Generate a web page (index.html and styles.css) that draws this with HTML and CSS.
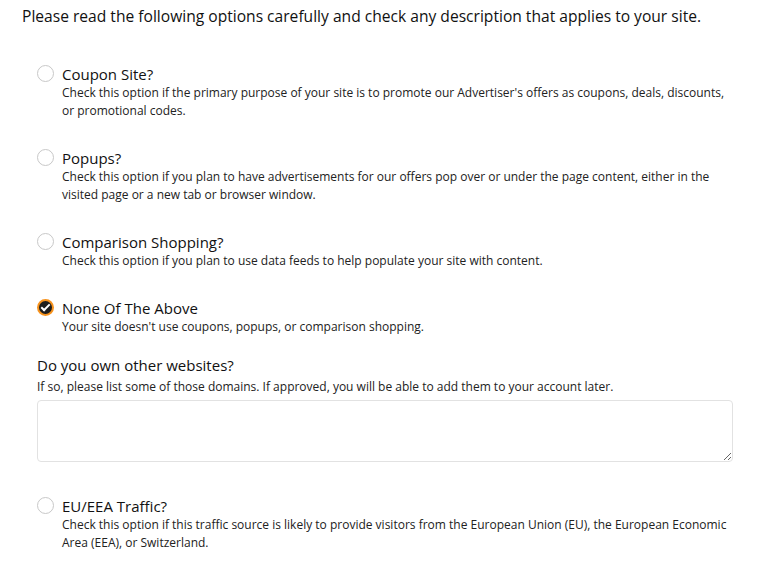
FILE: index.html
```html
<!DOCTYPE html>
<html lang="en">
<head>
  <meta charset="UTF-8">
  <title>Site Description</title>
  <link rel="stylesheet" href="styles.css">
</head>
<body>

<div class="page">
  <h3 class="intro">Please read the following options carefully and check any description that applies to your site.</h3>

  <div class="options">
    <label class="option">
      <input type="radio" name="sitetype" value="coupon">
      <span class="mark"></span>
      <span class="text">
        <span class="title">Coupon Site?</span>
        <span class="desc">Check this option if the primary purpose of your site is to promote our Advertiser's offers as coupons, deals, discounts, or promotional codes.</span>
      </span>
    </label>

    <label class="option">
      <input type="radio" name="sitetype" value="popups">
      <span class="mark"></span>
      <span class="text">
        <span class="title">Popups?</span>
        <span class="desc">Check this option if you plan to have advertisements for our offers pop over or under the page content, either in the visited page or a new tab or browser window.</span>
      </span>
    </label>

    <label class="option">
      <input type="radio" name="sitetype" value="comparison">
      <span class="mark"></span>
      <span class="text">
        <span class="title">Comparison Shopping?</span>
        <span class="desc">Check this option if you plan to use data feeds to help populate your site with content.</span>
      </span>
    </label>

    <label class="option">
      <input type="radio" name="sitetype" value="none" checked>
      <span class="mark"></span>
      <span class="text">
        <span class="title">None Of The Above</span>
        <span class="desc">Your site doesn't use coupons, popups, or comparison shopping.</span>
      </span>
    </label>

    <div class="field">
      <label class="field-title" for="domains">Do you own other websites?</label>
      <p class="field-help">If so, please list some of those domains. If approved, you will be able to add them to your account later.</p>
      <textarea id="domains"></textarea>
    </div>

    <label class="option">
      <input type="checkbox" name="eu" value="eu">
      <span class="mark"></span>
      <span class="text">
        <span class="title">EU/EEA Traffic?</span>
        <span class="desc">Check this option if this traffic source is likely to provide visitors from the European Union (EU), the European Economic Area (EEA), or Switzerland.</span>
      </span>
    </label>
  </div>
</div>

</body>
</html>
```

FILE: styles.css
```css
body { margin: 0; background: #fff; font-family: "Open Sans", Arial, sans-serif; color: #1a1a1a; }
.page { padding: 5px 22px 0 22px; }
.intro { margin: 0; font-size: 15.6px; font-weight: 500; line-height: 22px; color: #111; }
.options { padding: 37px 0 0 15px; width: 696px; }
.option { display: flex; align-items: flex-start; margin-bottom: 28px; cursor: pointer; }
.option input { display: none; }
.mark { flex: none; width: 17px; height: 17px; border: 1px solid #c8c8c8; border-radius: 50%; margin: 1px 8px 0 0; box-sizing: border-box; position: relative; }
.option input:checked + .mark { border: 2px solid #f7931e; background: #1d1d1d; }
.option input:checked + .mark::after { content: ""; position: absolute; left: 4px; top: 1px; width: 3px; height: 7px; border: solid #fff; border-width: 0 2px 2px 0; transform: rotate(45deg); }
.text { display: block; }
.title { display: block; font-size: 15px; font-weight: 500; line-height: 20px; color: #111; }
.desc { display: block; font-size: 12px; line-height: 18px; color: #222; }
.field { margin: -9px 0 34px 0; }
.field-title { display: block; font-size: 15px; font-weight: 500; line-height: 21px; color: #111; }
.field-help { margin: 2px 0 4px 0; font-size: 12px; line-height: 18px; color: #222; }
textarea { display: block; width: 100%; height: 62px; box-sizing: border-box; border: 1px solid #e2e2e2; border-radius: 4px; resize: vertical; font-family: inherit; }
```
